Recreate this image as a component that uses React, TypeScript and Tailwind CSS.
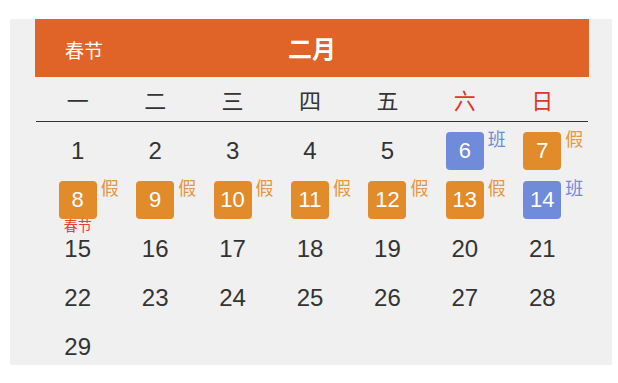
import React from "react";

type Day = { n: number; tag?: "假" | "班"; note?: string };

const weekdays = ["一", "二", "三", "四", "五", "六", "日"];

const days: Day[] = [
  { n: 1 }, { n: 2 }, { n: 3 }, { n: 4 }, { n: 5 },
  { n: 6, tag: "班" }, { n: 7, tag: "假" },
  { n: 8, tag: "假", note: "春节" }, { n: 9, tag: "假" }, { n: 10, tag: "假" },
  { n: 11, tag: "假" }, { n: 12, tag: "假" }, { n: 13, tag: "假" }, { n: 14, tag: "班" },
];
for (let i = 15; i <= 29; i++) days.push({ n: i });

const cjk = "font-['Noto_Sans_CJK_SC',sans-serif]";
const num = "font-['Liberation_Sans','Noto_Sans_CJK_SC',sans-serif]";

function Cell({ d }: { d: Day }) {
  if (!d.tag) {
    return (
      <div className={`h-[49px] flex items-center justify-center text-[24px] text-[#333] ${num}`}>
        {d.n}
      </div>
    );
  }
  const off = d.tag === "班";
  return (
    <div className="h-[49px] flex items-center justify-center">
      <div
        className={`relative w-[38px] h-[38px] rounded-[4px] flex items-center justify-center text-white text-[22px] ${num} ${
          off ? "bg-[#6f8bd9]" : "bg-[#e28b2b]"
        }`}
      >
        {d.n}
        <span
          className={`absolute left-[42px] top-[-3px] text-[18px] leading-none ${cjk} ${
            off ? "text-[#6f8bd9]" : "text-[#e6963f]"
          }`}
        >
          {d.tag}
        </span>
        {d.note && (
          <span className={`absolute left-1/2 -translate-x-1/2 top-[37px] text-[14px] leading-none whitespace-nowrap text-[#e8402e] ${cjk}`}>
            {d.note}
          </span>
        )}
      </div>
    </div>
  );
}

export default function App() {
  return (
    <div className="w-[618px] h-[383px] bg-white pt-[19px] pl-[10px]">
      <div className="w-[602px] h-[346px] bg-[#f0f0f0] overflow-hidden pl-[25px] pr-[23px]">
        <div className="h-[58px] bg-[#e06428] grid grid-cols-[1fr_auto_1fr] items-center text-white">
          <div className={`pl-[30px] pt-[4px] text-[19px] ${cjk}`}>春节</div>
          <div className={`text-[24px] font-bold ${cjk}`}>二月</div>
          <div />
        </div>
        <div className="pl-[4px] pr-[8px]">
          <div className="grid grid-cols-7 h-[44px] items-center">
            {weekdays.map((w, i) => (
              <div
                key={w}
                className={`text-center text-[22px] ${cjk} ${i >= 5 ? "text-[#e3342a]" : "text-[#333]"}`}
              >
                {w}
              </div>
            ))}
          </div>
        </div>
        <div className="h-px bg-[#333] ml-[1px] mr-[1px]" />
        <div className="pl-[4px] pr-[8px] pt-[4px]">
          <div className="grid grid-cols-7">
            {days.map((d) => (
              <Cell key={d.n} d={d} />
            ))}
          </div>
        </div>
      </div>
    </div>
  );
}
